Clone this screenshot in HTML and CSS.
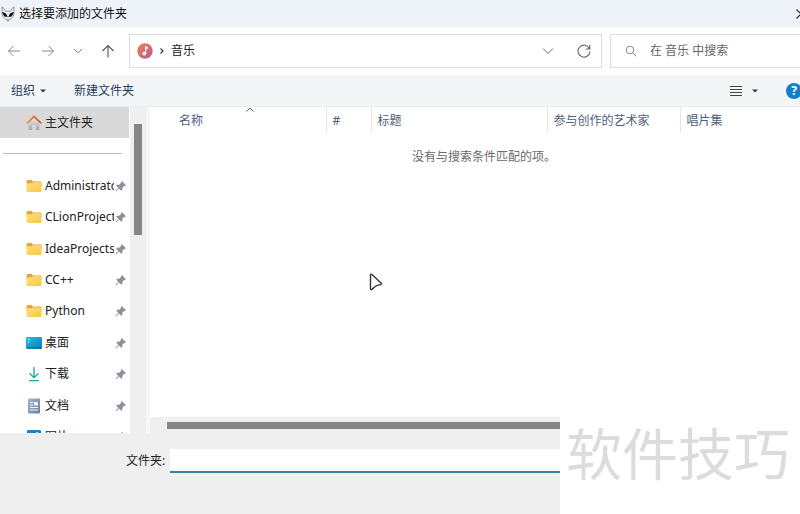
FILE: index.html
```html
<!DOCTYPE html>
<html lang="zh-CN">
<head>
    <meta charset="UTF-8">
    <meta name="viewport" content="width=device-width, initial-scale=1.0">
    <title>选择要添加的文件夹</title>
    <link rel="stylesheet" href="styles.css">
</head>
<body>
    <svg class="symbols" aria-hidden="true">
        <defs>
            <linearGradient id="folder-fill" x1="0" y1="0" x2="1" y2="1">
                <stop offset="0" stop-color="#ffe08a"/>
                <stop offset="1" stop-color="#f8c73f"/>
            </linearGradient>
            <linearGradient id="desk-fill" x1="0" y1="0" x2="1" y2="1">
                <stop offset="0" stop-color="#27c3df"/>
                <stop offset="1" stop-color="#1272bd"/>
            </linearGradient>
            <linearGradient id="doc-fill" x1="0" y1="0" x2="1" y2="1">
                <stop offset="0" stop-color="#a3b8cd"/>
                <stop offset="1" stop-color="#637f9f"/>
            </linearGradient>
            <linearGradient id="music-fill" x1="0" y1="0" x2="1" y2="1">
                <stop offset="0" stop-color="#ef8050"/>
                <stop offset="1" stop-color="#b65a9c"/>
            </linearGradient>
            <linearGradient id="roof-fill" x1="0" y1="0" x2="1" y2="0">
                <stop offset="0" stop-color="#f09a45"/>
                <stop offset="1" stop-color="#c9561d"/>
            </linearGradient>
            <linearGradient id="wall-fill" x1="0" y1="0" x2="0" y2="1">
                <stop offset="0" stop-color="#e8e8e8"/>
                <stop offset="1" stop-color="#a9a9a9"/>
            </linearGradient>
        </defs>
        <symbol id="folder" viewBox="0 0 16 16">
            <path d="M.5 3.5Q.5 2 1.7 2H5.5L7 3.5H14.5Q15.5 3.5 15.5 4.5V8H.5Z" fill="#e3a52c"/>
            <path d="M.5 5.3H5.5L7 4.3H15.5V13Q15.5 14 14.5 14H1.5Q.5 14 .5 13Z" fill="url(#folder-fill)"/>
        </symbol>
        <symbol id="pin" viewBox="0 0 12 12">
            <path d="M6.8 1L11 5.2L10 6L9.4 5.8L7.4 7.8L7.3 10L6.3 10.7L4 8.5L1.3 11.2L.6 11.2L.7 10.6L3.4 7.9L1.2 5.7L2 4.8L4.2 4.7L6.2 2.7L6 2Z" fill="#8b929c"/>
        </symbol>
    </svg>

    <div class="dialog">
        <header class="titlebar">
            <svg class="app-icon" viewBox="0 0 14 16">
                <path d="M1 .8Q3.5 2 4.6 5.2H9.4Q10.5 2 13 .8L12.7 5Q14.6 9.5 7 15.3Q-.6 9.5 1.3 5Z" fill="#f1f1f1" stroke="#777" stroke-width=".7"/>
                <path d="M1.6 6.4Q5.5 6.8 6.3 10.8Q2.3 10.6 1.6 6.4ZM12.4 6.4Q8.5 6.8 7.7 10.8Q11.7 10.6 12.4 6.4Z" fill="#111" stroke="#111" stroke-width=".6"/>
                <path d="M6 13.5H8L7 14.8Z" fill="#555"/>
            </svg>
            <h1>选择要添加的文件夹</h1>
            <button class="close" aria-label="关闭">
                <svg viewBox="0 0 10 10"><path d="M.5 .5L9.5 9.5M9.5 .5L.5 9.5" stroke="#222" stroke-width="1.2"/></svg>
            </button>
        </header>

        <nav class="navbar">
            <button aria-label="后退"><svg viewBox="0 0 14 14"><path d="M13 7H1.5M6.5 2L1.5 7L6.5 12" stroke="#888"/></svg></button>
            <button aria-label="前进"><svg viewBox="0 0 14 14"><path d="M1 7H12.5M7.5 2L12.5 7L7.5 12" stroke="#888"/></svg></button>
            <button class="recent" aria-label="最近浏览的位置"><svg viewBox="0 0 14 14"><path d="M3 5L7 9L11 5" stroke="#888"/></svg></button>
            <button aria-label="向上"><svg viewBox="0 0 14 14"><path d="M7 13.5V1.5M1.5 7L7 1.5L12.5 7" stroke="#555" stroke-width="1.1"/></svg></button>
            <div class="address">
                <svg class="music" viewBox="0 0 16 16">
                    <circle cx="8" cy="8" r="7.7" fill="url(#music-fill)"/>
                    <path d="M8.2 10.5V3L11 4.2V6L9.2 5.4V10.5Z" fill="#fff"/>
                    <circle cx="7.3" cy="10.6" r="1.9" fill="#fff"/>
                </svg>
                <svg class="crumb" viewBox="0 0 6 8"><path d="M1.5 1.5L4 4L1.5 6.5" stroke="#333" stroke-width="1.1"/></svg>
                <span class="place">音乐</span>
                <button aria-label="展开"><svg viewBox="0 0 14 14"><path d="M2 4.5L7 9.5L12 4.5" stroke="#666"/></svg></button>
                <button aria-label="刷新"><svg viewBox="0 0 14 14"><path d="M12.6 5A6 6 0 1 0 13 7.5M12.8 1V5H8.8" stroke="#666" stroke-width="1.1"/></svg></button>
            </div>
            <label class="search">
                <svg viewBox="0 0 12 12"><circle cx="5" cy="5" r="3.8" stroke="#888"/><path d="M7.8 7.8L11.3 11.3" stroke="#888"/></svg>
                <input type="text" placeholder="在 音乐 中搜索" aria-label="在 音乐 中搜索">
            </label>
        </nav>

        <div class="toolbar">
            <button class="organize">组织 <svg class="caret" viewBox="0 0 6 4"><path d="M0 .5H6L3 3.5Z"/></svg></button>
            <button>新建文件夹</button>
            <button class="view" aria-label="更改视图">
                <svg class="lines" viewBox="0 0 12 12"><path d="M0 1.5H12M0 4.5H12M0 7.5H12M0 10.5H12" stroke="#444"/></svg>
                <svg class="caret" viewBox="0 0 6 4"><path d="M0 .5H6L3 3.5Z"/></svg>
            </button>
            <button class="help" aria-label="帮助">?</button>
        </div>

        <main class="content">
            <aside class="sidebar">
                <div class="tree">
                    <a class="home" href="#">
                        <svg class="icon" viewBox="0 0 16 16">
                            <path d="M2.5 7.5L8 2.5L13.5 7.5V15H9.8V10H6.2V15H2.5Z" fill="url(#wall-fill)"/>
                            <path d="M.8 8.3L8 1.5L15.2 8.3" fill="none" stroke="url(#roof-fill)" stroke-width="1.8"/>
                        </svg>
                        <span>主文件夹</span>
                    </a>
                    <hr>
                    <ul class="places">
                        <li><a href="#"><svg class="icon"><use href="#folder"/></svg><span>Administrator</span><svg class="pin"><use href="#pin"/></svg></a></li>
                        <li><a href="#"><svg class="icon"><use href="#folder"/></svg><span>CLionProjects</span><svg class="pin"><use href="#pin"/></svg></a></li>
                        <li><a href="#"><svg class="icon"><use href="#folder"/></svg><span>IdeaProjects</span><svg class="pin"><use href="#pin"/></svg></a></li>
                        <li><a href="#"><svg class="icon"><use href="#folder"/></svg><span>CC++</span><svg class="pin"><use href="#pin"/></svg></a></li>
                        <li><a href="#"><svg class="icon"><use href="#folder"/></svg><span>Python</span><svg class="pin"><use href="#pin"/></svg></a></li>
                        <li><a href="#">
                            <svg class="icon" viewBox="0 0 16 16"><rect y="2" width="16" height="12" rx="1" fill="url(#desk-fill)"/><path d="M2 4.5H3.5M2 7H3.5" stroke="#bdf2fa"/><path d="M1 12.8H15" stroke="#0e5f9f"/></svg>
                            <span>桌面</span><svg class="pin"><use href="#pin"/></svg></a></li>
                        <li><a href="#">
                            <svg class="icon" viewBox="0 0 16 16"><path d="M8 1V11.5M3.5 7.2L8 11.7L12.5 7.2M3 14.7H13" fill="none" stroke="#2ba38e" stroke-width="1.3"/></svg>
                            <span>下载</span><svg class="pin"><use href="#pin"/></svg></a></li>
                        <li><a href="#">
                            <svg class="icon" viewBox="0 0 16 16"><rect x="2" y=".5" width="12" height="15" rx="1" fill="url(#doc-fill)"/><path d="M4 4.5H7M4 7H7M4 9.5H12M4 12H12" stroke="#f2f6fa"/><rect x="8" y="4" width="4" height="3.5" fill="#f2f6fa"/></svg>
                            <span>文档</span><svg class="pin"><use href="#pin"/></svg></a></li>
                        <li><a href="#">
                            <svg class="icon" viewBox="0 0 16 16"><rect x="1" y="1" width="14" height="14" rx="1" fill="#1685cf"/><circle cx="11" cy="4.5" r="1.3" fill="#fff"/><path d="M2 14L7 8L12 14Z" fill="#c5ecfb"/></svg>
                            <span>图片</span><svg class="pin"><use href="#pin"/></svg></a></li>
                    </ul>
                </div>
                <div class="vscroll"><div class="thumb"></div></div>
            </aside>

            <section class="files">
                <table>
                    <thead>
                        <tr>
                            <th class="name">名称<svg class="sort" viewBox="0 0 8 5"><path d="M.5 4.5L4 1L7.5 4.5" fill="none" stroke="#667"/></svg></th>
                            <th class="num">#</th>
                            <th class="heading">标题</th>
                            <th class="artist">参与创作的艺术家</th>
                            <th>唱片集</th>
                        </tr>
                    </thead>
                </table>
                <p class="empty">没有与搜索条件匹配的项。</p>
                <div class="hscroll"><div class="thumb"></div></div>
            </section>
        </main>

        <footer class="footer">
            <label for="folder-name">文件夹:</label>
            <input id="folder-name" type="text">
        </footer>

        <svg class="pointer" viewBox="0 0 14 18"><path d="M1.5 2Q1.5 .5 3 1.5L12.3 10.2Q13 11.2 11.7 11.6Q6.5 12.2 3.2 16.2Q1.5 17.5 1.5 15.5Z" fill="#fff" stroke="#333" stroke-width="1.4"/></svg>
        <div class="watermark">软件技巧</div>
    </div>
</body>
</html>
```

FILE: styles.css
```css
* {
    box-sizing: border-box;
}

body {
    margin: 0;
    font-family: "Noto Sans", "Noto Sans CJK SC", sans-serif;
    font-size: 12px;
    line-height: 18px;
    color: #222;
    background: #fff;
}

button {
    display: flex;
    align-items: center;
    justify-content: center;
    padding: 0;
    border: none;
    background: none;
    font: inherit;
    color: inherit;
}

input {
    font: inherit;
    border: none;
    outline: none;
    padding: 0;
    min-width: 0;
}

a {
    color: inherit;
    text-decoration: none;
}

svg {
    display: block;
    flex: none;
}

.symbols {
    position: absolute;
    width: 0;
    height: 0;
}

.dialog {
    position: relative;
    display: flex;
    flex-direction: column;
    height: 100vh;
    overflow: hidden;
}

/* title bar */
.titlebar {
    display: flex;
    align-items: center;
    gap: 4px;
    height: 27px;
    padding-left: 1px;
    background: #eef3f9;
    color: #111;
}

.titlebar h1 {
    flex: 1;
    margin: 0;
    font-size: 12px;
    font-weight: normal;
}

.app-icon {
    width: 14px;
    height: 16px;
}

.close {
    margin-right: -6px;
}

.close svg {
    width: 10px;
    height: 10px;
}

/* navigation */
.navbar {
    display: flex;
    align-items: center;
    height: 48px;
    padding-left: 6px;
}

.navbar svg {
    fill: none;
}

.navbar button {
    width: 16px;
    margin-right: 18px;
}

.navbar button svg {
    width: 14px;
    height: 14px;
}

.navbar .recent {
    width: 12px;
    margin: 0 16px 0 -2px;
}

.navbar .recent + button {
    margin-right: 13px;
}

.address {
    display: flex;
    flex: 1;
    align-items: center;
    height: 34px;
    padding: 0 9px 0 7px;
    border: 1px solid #dcdcdc;
}

.address .music {
    width: 16px;
    height: 16px;
}

.address .crumb {
    width: 6px;
    height: 8px;
    margin: 0 6px;
}

.place {
    flex: 1;
}

.address button:last-child {
    margin-right: 0;
}

.address button + button {
    margin-left: 2px;
}

.search {
    display: flex;
    align-items: center;
    gap: 13px;
    width: 190px;
    height: 34px;
    margin-left: 8px;
    padding-left: 14px;
    border: 1px solid #dcdcdc;
    border-right: none;
}

.search svg {
    width: 12px;
    height: 12px;
}

.search input {
    flex: 1;
}

.search input::placeholder {
    color: #666;
    opacity: 1;
}

/* toolbar */
.toolbar {
    display: flex;
    align-items: center;
    height: 32px;
    padding-left: 11px;
    background: #f3f5f7;
    border-bottom: 1px solid #e9ecef;
    color: #27405f;
}

.organize {
    gap: 5px;
    margin-right: 28px;
}

.caret {
    width: 6px;
    height: 4px;
    fill: #27364a;
}

.lines {
    width: 12px;
    height: 12px;
}

.view {
    gap: 10px;
    margin-left: auto;
}

.help {
    width: 16px;
    height: 16px;
    margin-left: 28px;
    margin-right: -2px;
    border-radius: 50%;
    background: #137fca;
    color: #fff;
    font-weight: bold;
}

/* sidebar */
.content {
    display: flex;
    flex: 1;
    min-height: 0;
}

.sidebar {
    display: flex;
    width: 150px;
    overflow: hidden;
    border-right: 4px solid #f7f7f7;
}

.tree {
    width: 130px;
}

.home {
    display: flex;
    align-items: center;
    gap: 3px;
    width: 129px;
    height: 31px;
    padding-left: 26px;
    background: #d9d9d9;
}

.icon {
    width: 16px;
    height: 16px;
}

.tree hr {
    height: 1px;
    margin: 15px 8px 16px 3px;
    border: none;
    background: #bbb;
}

.places {
    display: flex;
    flex-direction: column;
    height: 283px;
    margin: 0;
    padding: 0;
    list-style: none;
}

.places li {
    flex: 1;
}

.places a {
    display: flex;
    align-items: center;
    gap: 3px;
    height: 100%;
    padding: 0 3px 0 26px;
}

.places span {
    flex: 1;
    overflow: hidden;
    white-space: nowrap;
}

.pin {
    width: 12px;
    height: 12px;
    margin-left: -2px;
}

.vscroll {
    width: 16px;
    padding: 17px 4px 0;
    background: #efefef;
}

.vscroll .thumb {
    height: 111px;
    background: #858585;
}

/* file list */
.files {
    display: flex;
    flex: 1;
    flex-direction: column;
    min-width: 0;
}

.files table {
    width: 100%;
    table-layout: fixed;
    border-collapse: collapse;
}

.files th {
    height: 26px;
    padding: 2px 6px 0;
    border-left: 1px solid #e5e5e5;
    font-weight: normal;
    text-align: left;
    color: #4c607a;
}

.files .name {
    position: relative;
    width: 176px;
    padding-left: 29px;
    border-left: none;
}

.files .num {
    width: 45px;
}

.files .heading {
    width: 176px;
}

.files .artist {
    width: 133px;
}

.sort {
    position: absolute;
    top: 0;
    left: 96px;
    width: 8px;
    height: 5px;
}

.empty {
    flex: 1;
    margin: 15px 0 0;
    padding-left: 18px;
    text-align: center;
    color: #6a6a6a;
}

.hscroll {
    height: 16px;
    padding: 5px 17px 4px;
    background: #efefef;
}

.hscroll .thumb {
    height: 7px;
    background: #858585;
}

/* footer */
.footer {
    display: flex;
    align-items: flex-start;
    gap: 5px;
    height: 81px;
    padding: 16px 16px 0 126px;
    background: #efefef;
}

.footer label {
    line-height: 24px;
}

.footer input {
    flex: 1;
    height: 24px;
    background: #fff;
    border-bottom: 2px solid #38809b;
}

.pointer {
    position: absolute;
    top: 273px;
    left: 369px;
    width: 14px;
    height: 18px;
}

.watermark {
    position: absolute;
    right: 0;
    bottom: 0;
    width: 240px;
    height: 97px;
    padding-left: 6px;
    background: #fff;
    color: #dcdcdc;
    font-size: 56px;
    line-height: 72px;
    white-space: nowrap;
}
```
